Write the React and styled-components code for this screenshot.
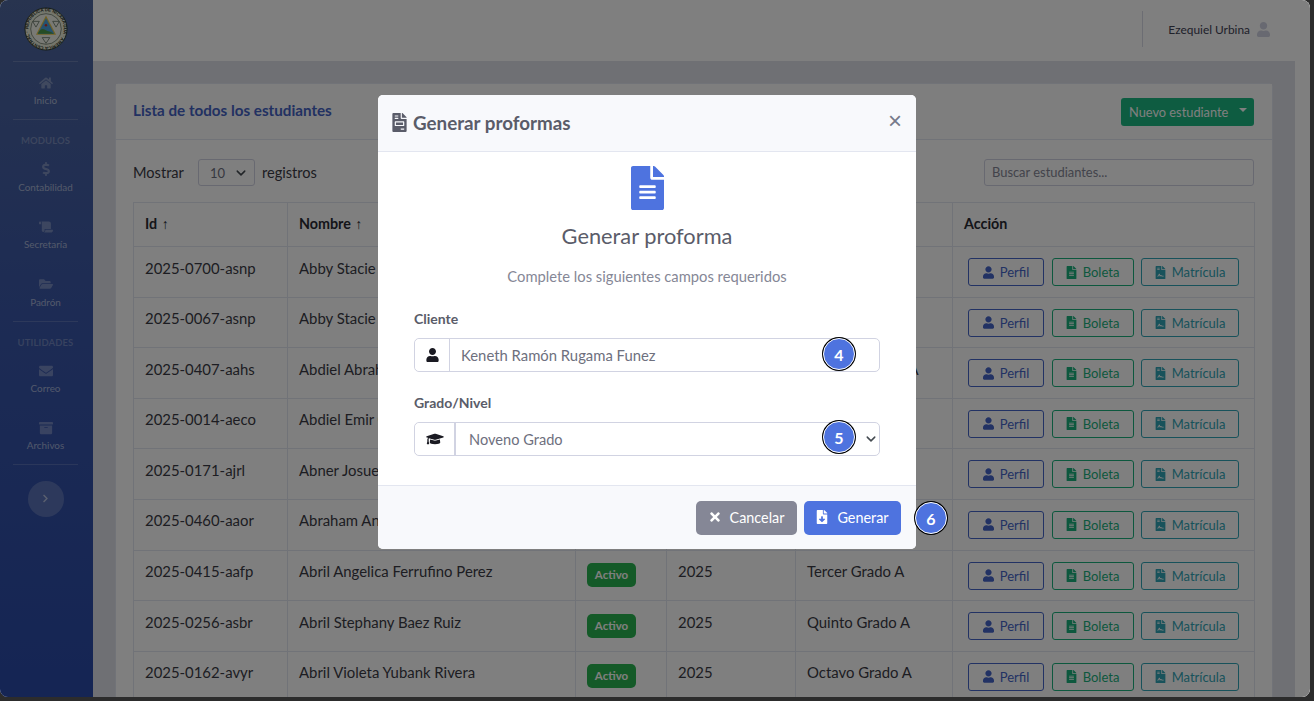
import React from 'react';
import styled, { createGlobalStyle } from 'styled-components';
import {
  FaHome, FaDollarSign, FaScroll, FaFolderOpen, FaEnvelope, FaArchive, FaChevronRight,
  FaUser, FaFileAlt, FaFileContract, FaFileInvoice, FaFileDownload, FaGraduationCap, FaTimes,
} from 'react-icons/fa';

const FONT = '"Lato", "Noto Sans", sans-serif';
const chevron = `url("data:image/svg+xml,%3csvg xmlns='http://www.w3.org/2000/svg' viewBox='0 0 16 16'%3e%3cpath fill='none' stroke='%23444a50' stroke-linecap='round' stroke-linejoin='round' stroke-width='2.4' d='M2 5l6 6 6-6'/%3e%3c/svg%3e")`;

const Global = createGlobalStyle`
  html, body { margin: 0; padding: 0; background: #2c2c2c; }
  * { box-sizing: border-box; }
  body { font-family: ${FONT}; font-size: 14.4px; color: #3a3b45; overflow: hidden; }
`;

const Screen = styled.div`
  width: 1314px; height: 701px; background: #2c2c2c; overflow: hidden;
`;
const Win = styled.div`
  position: relative; width: 1310px; height: 697px; border-radius: 8px; overflow: hidden;
  display: flex; background: #fff;
`;
const Sidebar = styled.aside`
  width: 93px; flex: none; padding-right: 2px; display: flex; flex-direction: column; align-items: center;
  background: linear-gradient(180deg, #50689f 0%, #3a57a8 45%, #2a4aa8 100%);
`;
const LogoBox = styled.div`
  height: 61px; width: 100%; display: flex; align-items: center; justify-content: center; padding-bottom: 3px;
`;
const Rule = styled.hr`
  width: 65px; height: 1px; margin: 0; border: 0; flex: none; background: rgba(255,255,255,.17);
`;
const NavItem = styled.div`
  width: 100%; height: 57.4px; flex: none; padding-top: 14px; display: flex; flex-direction: column; align-items: center;
  color: rgba(255,255,255,.55);
  svg { width: 14px; height: 14px; color: rgba(255,255,255,.3); flex: none; }
`;
const NavLabel = styled.span`
  margin-top: 4.4px; font-size: 9.9px; line-height: 12px; white-space: nowrap;
`;
const NavHeading = styled.div`
  width: 100%; height: ${(p) => p.$h}px; flex: none; padding-top: 15px; text-align: center; font-size: 9.5px; line-height: 12px; font-weight: 700;
  color: rgba(255,255,255,.28); letter-spacing: .1px;
`;
const Toggle = styled.button`
  width: 36px; height: 36px; margin-top: 15.4px; flex: none; padding: 0; border: 0; border-radius: 50%; background: rgba(255,255,255,.2);
  display: flex; align-items: center; justify-content: center; color: rgba(255,255,255,.55);
  svg { width: 9px; height: 9px; }
`;

const Main = styled.div`
  flex: 1; min-width: 0; display: flex; flex-direction: column;
`;
const Topbar = styled.header`
  height: 61px; flex: none; background: #fff; display: flex; align-items: center; justify-content: flex-end; padding: 0 40px 3px 0;
`;
const TopDivider = styled.div`
  width: 1px; height: 36px; background: #d9dbe6; margin-right: 25px;
`;
const UserName = styled.span`
  font-size: 11.9px; color: #3f4254; margin-right: 7px;
`;
const UserIcon = styled(FaUser)`
  width: 13px; height: 15px; color: #d1d3e2;
`;
const Below = styled.div`
  flex: 1; min-height: 0; display: flex;
`;
const Content = styled.main`
  flex: 1; min-width: 0; background: #dfe1e9; padding: 22px 22px 0; overflow: hidden;
`;
const ScrollTrack = styled.div`
  width: 15px; flex: none; background: #fff;
`;
const Card = styled.section`
  background: #fff; border: 1px solid #e3e6f0; border-bottom: 0; border-radius: 5px 5px 0 0; height: 700px;
`;
const CardHead = styled.div`
  height: 56px; border-bottom: 1px solid #e3e6f0; background: #fcfcfd; padding: 0 18px 0 17px; display: flex; align-items: center; justify-content: space-between;
`;
const CardTitle = styled.h6`
  margin: 0 0 4px; font-size: 15.2px; font-weight: 700; color: #4463c4;
`;
const NewBtn = styled.button`
  width: 133px; height: 28px; padding: 0 8px; border: 0; border-radius: 3px; background: #1cb883; color: #fff; font: 12.8px ${FONT};
  display: flex; align-items: center; justify-content: space-between;
  &::after { content: ''; border-top: 4px solid #fff; border-left: 4px solid transparent; border-right: 4px solid transparent; margin-top: -3px; margin-right: -1px; }
`;
const CardBody = styled.div`
  padding: 18px 18px 0 17px;
`;
const Tools = styled.div`
  display: flex; justify-content: space-between; align-items: center; height: 28px; margin-bottom: 16px;
`;
const ShowRow = styled.div`
  display: flex; align-items: center; padding-top: 2px; font-size: 14.6px; line-height: 30px; color: #3a3b45;
`;
const PageSelect = styled.select`
  width: 57px; height: 27px; margin: -1px 7px 0 14px; padding: 0 0 0 11px; appearance: none; border: 1px solid #d1d3e2; border-radius: 3px;
  background: #fff ${chevron} no-repeat right 8px center / 10px 10px; color: #6e707e; font: 13px ${FONT};
`;
const Search = styled.input`
  width: 270px; height: 27px; padding: 0 7px; border: 1px solid #d1d3e2; border-radius: 3px; font: 12.9px ${FONT}; color: #6e707e; background: #fff;
  &::placeholder { color: #858796; opacity: 1; }
`;
const Table = styled.table`
  width: 1121px; border-collapse: collapse; table-layout: fixed; color: #3a3b45; font-size: 14.9px;
`;
const Th = styled.th`
  width: ${(p) => p.$w}px; height: 44px; padding: 0 11px 2px; border: 1px solid #e3e6f0; text-align: left; font-weight: 700; font-size: 14.3px; color: #2a2b33; white-space: nowrap;
`;
const SortArrow = styled.span`
  font: 400 14px "Liberation Sans", sans-serif; margin-left: 1px;
`;
const Tr = styled.tr`
  height: 50.6px;
`;
const Td = styled.td`
  padding: 10.5px 11px 0; border: 1px solid #e3e6f0; vertical-align: top; white-space: nowrap; overflow: hidden; line-height: 21px;
`;
const ActionCell = styled(Td)`
  padding: 11px 0 0 15px;
`;
const Actions = styled.div`
  display: flex; gap: 7.5px;
`;
const Status = styled.span`
  display: inline-block; margin-top: 2px; width: 49px; height: 24px; border-radius: 5px; background: #29b550; color: #fff; font-size: 11.5px; font-weight: 700; line-height: 24px; text-align: center;
`;
const tones = { blue: '#4565c8', green: '#1ab07c', teal: '#31a5b6' };
const ActBtn = styled.button`
  height: 28px; width: ${(p) => p.$w}px; padding: 0; border: 1px solid ${(p) => tones[p.$tone]}; border-radius: 3px; background: transparent; color: ${(p) => tones[p.$tone]};
  font: 13px ${FONT}; display: flex; align-items: center; justify-content: center; gap: 6px;
  svg { width: 11px; height: 13px; }
`;

const Backdrop = styled.div`
  position: absolute; inset: 0; background: rgba(0,0,0,.5);
`;
const Modal = styled.div`
  position: absolute; left: 378px; top: 95px; width: 538px; height: 454px; background: #fff; border-radius: 5px; display: flex; flex-direction: column; color: #5a5c69;
`;
const MHead = styled.div`
  height: 57px; flex: none; background: #f8f9fc; border-bottom: 1px solid #e3e6f0; border-radius: 5px 5px 0 0; display: flex; align-items: center; padding: 0 12px 2px 14px;
  svg.doc { width: 15px; height: 19px; color: #5a5c69; margin-right: 6px; }
`;
const MTitle = styled.h5`
  margin: 0; flex: 1; font-size: 18.8px; font-weight: 700; color: #5a5c69;
`;
const Close = styled.button`
  width: 18px; height: 22px; margin-top: -2px; padding: 0; border: 0; background: none; color: #77798a; font: 400 24px/22px "Liberation Sans", sans-serif; text-align: center;
`;
const MBody = styled.div`
  flex: 1; padding: 14px 36px 0; display: flex; flex-direction: column;
`;
const BigIcon = styled(FaFileAlt)`
  width: 33px; height: 44px; color: #4e73df; align-self: center; flex: none;
`;
const BigTitle = styled.div`
  margin-top: 13px; text-align: center; font-size: 21.8px; line-height: 26px; color: #5a5c69;
`;
const Sub = styled.div`
  margin-top: 18px; text-align: center; font-size: 14.75px; line-height: 18px; color: #858796;
`;
const Label = styled.label`
  display: block; margin-top: ${(p) => p.$mt}px; font-size: 14px; line-height: 18px; font-weight: 700; color: #5a5c69;
`;
const Group = styled.div`
  position: relative; margin-top: 10px; height: 34px; display: flex; border: 1px solid #d1d3e2; border-radius: 5px;
`;
const Prepend = styled.div`
  width: ${(p) => p.$w}px; flex: none; border-right: ${(p) => p.$b}px solid #d1d3e2; background: #fff; border-radius: 5px 0 0 5px; display: flex; align-items: center; justify-content: center; color: #1a1a22;
  svg { width: ${(p) => p.$i}px; height: 14px; }
`;
const TextField = styled.input`
  flex: 1; min-width: 0; border: 0; outline: 0; padding: 0 11px; background: transparent; color: #6e707e; font: 14.85px ${FONT};
`;
const SelectField = styled.select`
  flex: 1; min-width: 0; appearance: none; border: 0; outline: 0; padding: 0 0 0 13px; color: #6e707e; font: 14.6px ${FONT};
  background: transparent ${chevron} no-repeat right 3px center / 10px 10px;
`;
const Bubble = styled.span`
  position: absolute; left: ${(p) => p.$x}px; top: ${(p) => p.$y}px; width: 32px; height: 32px; border-radius: 50%;
  background: #4e73df; color: #fff; font-size: 16px; font-weight: 700; display: flex; align-items: center; justify-content: center;
  border: 1px solid #fff; box-shadow: 0 0 0 1px #000;
`;
const MFoot = styled.div`
  height: 64px; flex: none; background: #f8f9fc; border-top: 1px solid #e3e6f0; border-radius: 0 0 5px 5px; display: flex; align-items: center; justify-content: flex-end; gap: 7px; padding: 0 15px 0 0;
`;
const FootBtn = styled.button`
  height: 34px; width: ${(p) => p.$w}px; border: 0; padding: 0 0 1px; border-radius: 5px; background: ${(p) => p.$bg}; color: #fff; font: 14.4px ${FONT};
  display: flex; align-items: center; justify-content: center; gap: 9px;
  svg { width: 12px; height: 14px; }
`;

const rows = [
  ['2025-0700-asnp', 'Abby Stacie Narvaez Perez', 'Primer Grado A'],
  ['2025-0067-asnp', 'Abby Stacie Navarro Paz', 'Cuarto Grado A'],
  ['2025-0407-aahs', 'Abdiel Abraham Hernandez', 'Séptimo Grado A'],
  ['2025-0014-aeco', 'Abdiel Emir Castro Ortiz', 'Sexto Grado A'],
  ['2025-0171-ajrl', 'Abner Josue Rivas Lopez', 'Quinto Grado A'],
  ['2025-0460-aaor', 'Abraham Antonio Ortiz Ruiz', 'Tercer Grado A'],
  ['2025-0415-aafp', 'Abril Angelica Ferrufino Perez', 'Tercer Grado A'],
  ['2025-0256-asbr', 'Abril Stephany Baez Ruiz', 'Quinto Grado A'],
  ['2025-0162-avyr', 'Abril Violeta Yubank Rivera', 'Octavo Grado A'],
];

const Logo = () => (
  <svg width="44" height="44" viewBox="0 0 46 46" aria-hidden="true">
    <defs><path id="ring" d="M23 23m-18.6 0a18.6 18.6 0 1 1 37.2 0a18.6 18.6 0 1 1-37.2 0" /></defs>
    <circle cx="23" cy="23" r="22" fill="#e9ecd9" stroke="#2b3a2f" strokeWidth="1" />
    <circle cx="23" cy="23" r="16" fill="#f3f5ea" stroke="#3a4a3a" strokeWidth=".6" />
    <text fontSize="4.6" fontWeight="700" fontFamily="Liberation Sans, sans-serif" fill="#1c2a20" textLength="114">
      <textPath href="#ring">REPUBLICA DE NICARAGUA · AMERICA CENTRAL ·</textPath>
    </text>
    <path d="M23 9 33.5 29h-21z" fill="#e4c44a" />
    <path d="M23 11.5 31.6 28H14.4z" fill="#4aa3df" />
    <path d="M14.4 28c2-5 5-6 8-4s5 1 9.2 4z" fill="#4d9a48" />
    <circle cx="23" cy="19" r="1.3" fill="#c8322b" />
    <path d="M9 15h7l-3.5 6zM30 15h7l-3.5 6zM19 32h8l-4 6z" fill="none" stroke="#6c7a6c" strokeWidth=".9" />
  </svg>
);

export default function App() {
  return (
    <Screen>
      <Global />
      <Win>
        <Sidebar>
          <LogoBox><Logo /></LogoBox>
          <Rule />
          <NavItem><FaHome /><NavLabel>Inicio</NavLabel></NavItem>
          <Rule />
          <NavHeading $h={28}>MODULOS</NavHeading>
          <NavItem><FaDollarSign /><NavLabel>Contabilidad</NavLabel></NavItem>
          <NavItem><FaScroll /><NavLabel>Secretaría</NavLabel></NavItem>
          <NavItem><FaFolderOpen /><NavLabel>Padrón</NavLabel></NavItem>
          <Rule />
          <NavHeading $h={28}>UTILIDADES</NavHeading>
          <NavItem><FaEnvelope /><NavLabel>Correo</NavLabel></NavItem>
          <NavItem><FaArchive /><NavLabel>Archivos</NavLabel></NavItem>
          <Rule />
          <Toggle><FaChevronRight /></Toggle>
        </Sidebar>
        <Main>
          <Topbar>
            <TopDivider />
            <UserName>Ezequiel Urbina</UserName>
            <UserIcon />
          </Topbar>
          <Below>
            <Content>
              <Card>
                <CardHead>
                  <CardTitle>Lista de todos los estudiantes</CardTitle>
                  <NewBtn>Nuevo estudiante</NewBtn>
                </CardHead>
                <CardBody>
                  <Tools>
                    <ShowRow>
                      Mostrar
                      <PageSelect defaultValue="10"><option>10</option></PageSelect>
                      registros
                    </ShowRow>
                    <Search placeholder="Buscar estudiantes..." />
                  </Tools>
                  <Table>
                    <thead>
                      <tr>
                        <Th $w={154}>Id <SortArrow>↑</SortArrow></Th>
                        <Th $w={288}>Nombre <SortArrow>↑</SortArrow></Th>
                        <Th $w={91}>Estado</Th>
                        <Th $w={129}>Año</Th>
                        <Th $w={157}>Grado</Th>
                        <Th $w={302}>Acción</Th>
                      </tr>
                    </thead>
                    <tbody>
                      {rows.map(([id, name, grade]) => (
                        <Tr key={id}>
                          <Td>{id}</Td>
                          <Td>{name}</Td>
                          <Td><Status>Activo</Status></Td>
                          <Td>2025</Td>
                          <Td>{grade}</Td>
                          <ActionCell>
                            <Actions>
                              <ActBtn $tone="blue" $w={76}><FaUser />Perfil</ActBtn>
                              <ActBtn $tone="green" $w={82}><FaFileAlt />Boleta</ActBtn>
                              <ActBtn $tone="teal" $w={98}><FaFileContract />Matrícula</ActBtn>
                            </Actions>
                          </ActionCell>
                        </Tr>
                      ))}
                    </tbody>
                  </Table>
                </CardBody>
              </Card>
            </Content>
            <ScrollTrack />
          </Below>
        </Main>
        <Backdrop />
        <Modal>
          <MHead>
            <FaFileInvoice className="doc" />
            <MTitle>Generar proformas</MTitle>
            <Close>×</Close>
          </MHead>
          <MBody>
            <BigIcon />
            <BigTitle>Generar proforma</BigTitle>
            <Sub>Complete los siguientes campos requeridos</Sub>
            <Label $mt={25}>Cliente</Label>
            <Group>
              <Prepend $w={35} $b={1} $i={13}><FaUser /></Prepend>
              <TextField readOnly value="Keneth Ramón Rugama Funez" />
            </Group>
            <Label $mt={22}>Grado/Nivel</Label>
            <Group>
              <Prepend $w={41} $b={2} $i={18}><FaGraduationCap /></Prepend>
              <SelectField defaultValue="Noveno Grado"><option>Noveno Grado</option></SelectField>
            </Group>
          </MBody>
          <MFoot>
            <FootBtn $w={101} $bg="#858796"><FaTimes />Cancelar</FootBtn>
            <FootBtn $w={97} $bg="#4e73df"><FaFileDownload />Generar</FootBtn>
          </MFoot>
          <Bubble $x={445} $y={243}>4</Bubble>
          <Bubble $x={445} $y={326}>5</Bubble>
          <Bubble $x={537} $y={407}>6</Bubble>
        </Modal>
      </Win>
    </Screen>
  );
}
